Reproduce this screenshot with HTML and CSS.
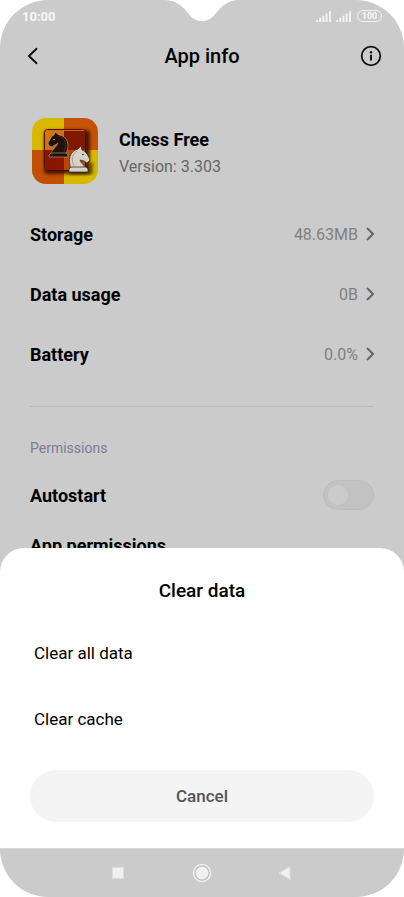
FILE: index.html
```html
<!DOCTYPE html>
<html lang="en">
<head>
<meta charset="utf-8">
<meta name="viewport" content="width=device-width, initial-scale=1">
<title>App info</title>
<link rel="stylesheet" href="styles.css">
</head>
<body>
<div class="phone">
  <svg class="notch" width="76" height="22" viewBox="0 0 76 22" aria-hidden="true"><path d="M0 0C12 0 18 6 24 13C28 18.500 32 21 38 21C44 21 48 18.500 52 13C58 6 64 0 76 0Z" fill="#fff"/></svg>
  <div class="status">
    <span class="time">10:00</span>
    <div class="indicators">
      <svg width="16" height="12" viewBox="0 0 16 12" aria-hidden="true"><path d="M0 12V10.500L2 9.500V12ZM3.200 12V7.800H5.200V12ZM6.400 12V5.800H8.400V12ZM9.600 12V3.500H11.600V12ZM13 12V1.500L15 .5V12Z" fill="#f2f2f2"/></svg>
      <svg width="16" height="12" viewBox="0 0 16 12" aria-hidden="true"><path d="M0 12V10.500L2 9.500V12ZM3.200 12V7.800H5.200V12ZM6.400 12V5.800H8.400V12ZM9.600 12V3.500H11.600V12ZM13 12V1.500L15 .5V12Z" fill="#f2f2f2"/></svg>
      <span class="battery">100</span>
    </div>
  </div>
  <header class="header">
    <button class="icon-button" type="button" aria-label="Back"><svg width="12" height="20" viewBox="0 0 12 20"><path d="M10 2.200L2 10L10 17.800" fill="none" stroke="#111" stroke-width="2"/></svg></button>
    <h1 class="title">App info</h1>
    <button class="icon-button" type="button" aria-label="Information"><svg width="22" height="22" viewBox="0 0 22 22"><circle cx="11" cy="11" r="9.300" fill="none" stroke="#111" stroke-width="1.800"/><circle cx="11" cy="7.200" r="1.200" fill="#111"/><path d="M11 9.800V15.500" stroke="#111" stroke-width="2"/></svg></button>
  </header>
  <main class="content">
    <section class="app">
      <svg class="app-icon" width="66" height="66" viewBox="0 0 66 66" role="img" aria-label="Chess Free">
        <defs>
          <clipPath id="tile"><rect width="66" height="66" rx="14"/></clipPath>
          <filter id="soft" x="-20%" y="-20%" width="150%" height="150%"><feGaussianBlur stdDeviation="1.400"/></filter>
          <linearGradient id="corner" x2="1" y2="1"><stop stop-color="#d87814"/><stop offset="1" stop-color="#bd4c05"/></linearGradient>
        </defs>
        <g clip-path="url(#tile)">
          <path d="M0 0H32V32H0Z" fill="#d9b900"/><path d="M32 0H66V32H32Z" fill="#c65207"/>
          <path d="M0 32H32V66H0Z" fill="#c34f05"/><path d="M32 32H66V66H32Z" fill="#d7b700"/>
        </g>
        <rect x="12" y="12" width="46" height="44" rx="4" fill="#341000" opacity=".85" filter="url(#soft)"/>
        <rect x="12.500" y="11.500" width="41" height="41" rx="3" fill="url(#corner)"/>
        <path d="M32 12H51Q53 12 53 14V32H32Z" fill="#811800"/><path d="M13 32H32V52H15Q13 52 13 50Z" fill="#8b1600"/><path d="M32 32H53V52H32Z" fill="#b84506"/>
        <rect x="12.500" y="11.500" width="41" height="41" rx="3" fill="none" stroke="#4b1002"/>
        <path d="M14 12.500H52" stroke="#db6b13"/>
        <g stroke="#a8998c" stroke-width=".7" stroke-linejoin="round" fill="#21100c">
          <path d="M19 36C19 32 24 30 26 25C24 27 22 27 20 29L17 28L16 25L20 18L22 17L23 14L27 17C36 18 38 28 34 36Z"/>
          <path d="M19 35H34L36 37V39H17V37Z"/>
        </g>
        <path d="M27 18C34 21 35 27 32 34" fill="none" stroke="#50291f"/><circle cx="22" cy="21.500" r=".7" fill="#e2cfbd"/>
        <path d="M38 55H59V50L60 45" fill="none" stroke="#241505" stroke-width="3" opacity=".6" filter="url(#soft)"/>
        <g stroke="#3c302a" stroke-width=".8" stroke-linejoin="round" fill="#d8d1c6">
          <path d="M39 51C36 43 37 33 46 31L49 28L50 32C54 33 57 39 58 42L55 45L52 43L48 42C49 46 53 47 54 51Z"/>
          <path d="M39 49H54L56 51V54H37V51Z"/>
        </g>
        <path d="M45 33C40 36 39 42 42 48" fill="none" stroke="#aaa093"/><circle cx="51" cy="36.500" r=".8" fill="#30251f"/>
      </svg>
      <div class="app-text">
        <h2 class="app-name">Chess Free</h2>
        <p class="version">Version: 3.303</p>
      </div>
    </section>
    <a class="row" href="#storage"><span>Storage</span><span class="value">48.63MB<svg class="chevron" width="8" height="14" viewBox="0 0 8 14"><path d="M1 1L7 7L1 13"/></svg></span></a>
    <a class="row" href="#data"><span>Data usage</span><span class="value">0B<svg class="chevron" width="8" height="14" viewBox="0 0 8 14"><path d="M1 1L7 7L1 13"/></svg></span></a>
    <a class="row" href="#battery"><span>Battery</span><span class="value">0.0%<svg class="chevron" width="8" height="14" viewBox="0 0 8 14"><path d="M1 1L7 7L1 13"/></svg></span></a>
    <hr class="divider">
    <h3 class="section-label">Permissions</h3>
    <div class="row"><label for="autostart">Autostart</label><input class="switch" id="autostart" type="checkbox" role="switch"></div>
    <a class="row compact" href="#permissions">App permissions</a>
  </main>
  <section class="sheet" role="dialog" aria-labelledby="sheet-title">
    <h2 class="sheet-title" id="sheet-title">Clear data</h2>
    <button class="option" type="button">Clear all data</button>
    <button class="option" type="button">Clear cache</button>
    <button class="cancel" type="button">Cancel</button>
  </section>
  <nav class="nav" aria-label="System">
    <button type="button" aria-label="Recent apps"><svg width="20" height="20" viewBox="0 0 20 20"><path d="M4.500 4.500H15.500V15.500H4.500Z" fill="#f0f0f0" stroke="#dedede"/></svg></button>
    <button type="button" aria-label="Home"><svg width="20" height="20" viewBox="0 0 20 20"><circle cx="10" cy="10" r="8.500" fill="#bdbdbd" stroke="#f2f2f2" stroke-width="1.400"/><circle cx="10" cy="10" r="6.400" fill="#f0f0f0"/></svg></button>
    <button type="button" aria-label="Back"><svg width="20" height="20" viewBox="0 0 20 20"><path d="M3 10L14 3.500V16.500Z" fill="#f0f0f0" stroke="#dedede"/></svg></button>
  </nav>
</div>
</body>
</html>
```
FILE: styles.css
```css
* { box-sizing: border-box; }
body { margin: 0; background: #fff; color: #000; font-family: Roboto, sans-serif; }
h1, h2, h3, p { margin: 0; }
button { padding: 0; border: 0; background: none; color: inherit; font: inherit; cursor: pointer; }
svg { display: block; }
a { color: inherit; text-decoration: none; }

.phone {
  position: relative;
  display: flex;
  flex-direction: column;
  height: 100vh;
  overflow: hidden;
  background: #cbcbcb;
  border-radius: 48px;
}
.notch { position: absolute; top: 0; left: 50%; margin-left: -38px; }

.status {
  display: flex;
  justify-content: space-between;
  align-items: center;
  height: 32px;
  padding: 0 22px;
  color: #f8f8f8;
}
.time { font-size: 13px; font-weight: 700; }
.indicators { display: flex; align-items: center; gap: 4px; }
.battery {
  width: 25px;
  margin-left: 1px;
  border: 1px solid #f2f2f2;
  border-radius: 6px;
  font-size: 9px;
  font-weight: 700;
  line-height: 10px;
  text-align: center;
}

.header {
  display: flex;
  justify-content: space-between;
  align-items: center;
  height: 48px;
  padding: 0 22px;
}
.icon-button { display: grid; place-items: center; width: 22px; height: 32px; }
.title { font-size: 20px; font-weight: 500; }

.content { flex: 1; min-height: 0; padding: 38px 30px 0; overflow: hidden; }
.app { display: flex; align-items: center; gap: 21px; height: 66px; margin-bottom: 20px; padding-left: 2px; }
.app-text { padding-top: 3px; }
.app-name { font-size: 18px; font-weight: 700; line-height: 27px; }
.version { color: #666; font-size: 16px; line-height: 27px; }

.row {
  display: flex;
  justify-content: space-between;
  align-items: center;
  height: 60px;
  font-size: 18px;
  font-weight: 700;
}
.compact { height: 40px; }
.value { display: flex; align-items: center; gap: 8px; color: #808080; font-size: 16px; font-weight: 400; }
.chevron path { fill: none; stroke: #666; stroke-width: 2; }
.divider { height: 1px; margin: 22px 0 24px; border: 0; background: #b8b8b8; }
.section-label { color: #7b7c99; font-size: 14px; font-weight: 400; line-height: 34px; }

.switch {
  appearance: none;
  display: flex;
  align-items: center;
  width: 51px;
  height: 30px;
  margin: 0;
  padding: 0 4px;
  border: 1px solid #bdbdbd;
  border-radius: 15px;
  background: #c2c2c2;
}
.switch::before { content: ""; width: 20px; height: 20px; border-radius: 50%; background: #cbcbcb; }
.switch:checked { justify-content: flex-end; }

.sheet {
  position: absolute;
  right: 0;
  bottom: 49px;
  left: 0;
  display: flex;
  flex-direction: column;
  padding: 28px 30px 26px;
  background: #fff;
  border-radius: 24px 24px 0 0;
}
.sheet-title { margin-bottom: 14px; font-size: 19px; font-weight: 500; line-height: 30px; text-align: center; }
.option { height: 66px; padding: 0 4px; font-size: 17px; text-align: left; }
.cancel { height: 52px; margin-top: 18px; border-radius: 26px; background: #f4f4f4; color: #555; font-size: 17px; font-weight: 500; }

.nav { display: flex; justify-content: center; align-items: center; gap: 64px; height: 49px; border-top: 1px solid #d8d8d8; }
```
